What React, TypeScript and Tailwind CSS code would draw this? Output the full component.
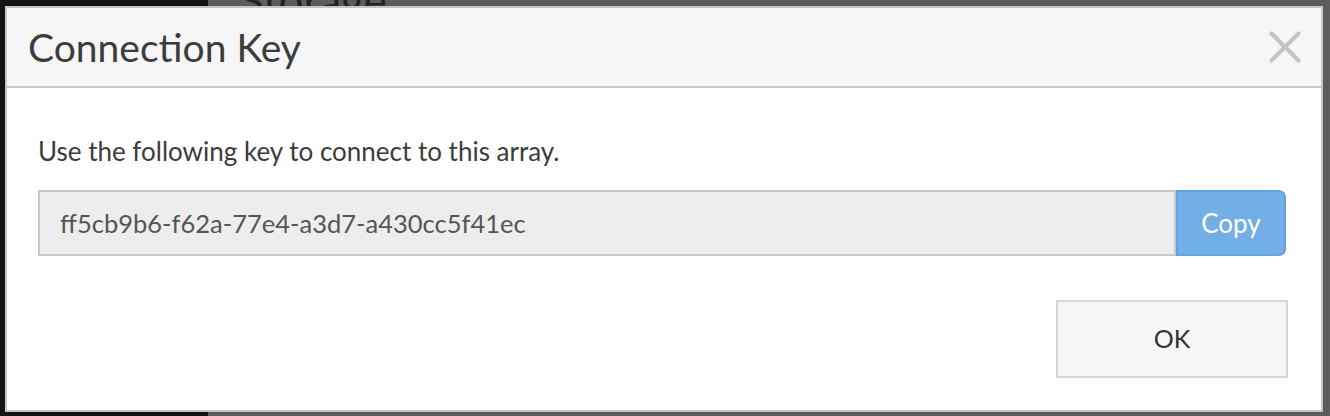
import { X } from "lucide-react";

const font = { fontFamily: '"Lato", "Open Sans", sans-serif' };

function Backdrop() {
  return (
    <div className="flex h-[416px] w-[1330px] overflow-hidden">
      <div className="w-[208px] bg-[#141414]" />
      <div className="flex-1 bg-[#5c5c5c]">
        <div className="ml-[32px] -mt-[22px] text-[44px] leading-none text-[#222]" style={font}>Storage</div>
      </div>
    </div>
  );
}

export default function App() {
  return (
    <div className="relative h-[416px] w-[1330px] overflow-hidden" style={font}>
      <Backdrop />
      <div className="absolute left-[5px] top-[6px] flex h-[406px] w-[1318px] flex-col border-2 border-[#c6c6c6] bg-white">
        <div className="flex h-[80px] items-center justify-between border-b-2 border-[#c8c8c8] bg-[#f6f6f6] pl-[21px] pr-[9px]">
          <h2 className="text-[39px] leading-none text-[#3c3c3c]">Connection Key</h2>
          <X className="size-[54px] text-[#c4c4c4]" strokeWidth={1.8} />
        </div>
        <div className="flex flex-1 flex-col pl-[31px] pr-[35px] pt-[50px]">
          <p className="text-[26px] leading-[26px] text-[#3c3c3c]">Use the following key to connect to this array.</p>
          <div className="mt-[26px] flex h-[66px]">
            <div className="flex flex-1 items-center border-2 border-[#c8c8c8] bg-[#ededed] px-[20px] text-[25.5px] text-[#555]">
              ff5cb9b6-f62a-77e4-a3d7-a430cc5f41ec
            </div>
            <button className="w-[110px] rounded-r-[7px] border-2 border-[#62a2e3] bg-[#73afe7] text-[26px] text-white">Copy</button>
          </div>
          <div className="mt-[44px] flex justify-end">
            <button className="mr-[-2px] h-[78px] w-[232px] border-2 border-[#d6d6d6] bg-[#f6f6f6] text-[25px] text-[#333]">OK</button>
          </div>
        </div>
      </div>
    </div>
  );
}
